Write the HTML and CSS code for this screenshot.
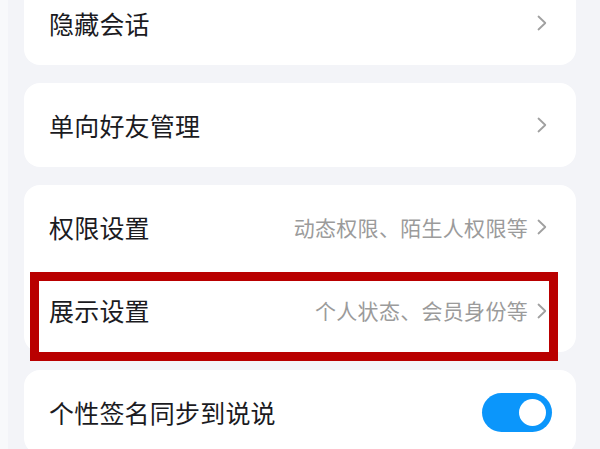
FILE: index.html
```html
<!DOCTYPE html>
<html lang="zh-CN">
<head>
<meta charset="utf-8">
<link rel="stylesheet" href="styles.css">
</head>
<body>
<div class="page">
  <div class="card">
    <div class="row">
      <span class="title">隐藏会话</span>
      <span class="right">
        <svg class="chev" width="10" height="16" viewBox="0 0 10 16"><path d="M1.5 1.5 L8.3 8 L1.5 14.5" fill="none" stroke="#a0a0a0" stroke-width="1.8" stroke-linecap="round" stroke-linejoin="round"/></svg>
      </span>
    </div>
  </div>
  <div class="card">
    <div class="row">
      <span class="title">单向好友管理</span>
      <span class="right">
        <svg class="chev" width="10" height="16" viewBox="0 0 10 16"><path d="M1.5 1.5 L8.3 8 L1.5 14.5" fill="none" stroke="#a0a0a0" stroke-width="1.8" stroke-linecap="round" stroke-linejoin="round"/></svg>
      </span>
    </div>
  </div>
  <div class="card">
    <div class="row">
      <span class="title">权限设置</span>
      <span class="right">
        <span class="sub">动态权限、陌生人权限等</span>
        <svg class="chev" width="10" height="16" viewBox="0 0 10 16"><path d="M1.5 1.5 L8.3 8 L1.5 14.5" fill="none" stroke="#a0a0a0" stroke-width="1.8" stroke-linecap="round" stroke-linejoin="round"/></svg>
      </span>
    </div>
    <div class="row row-short">
      <span class="title">展示设置</span>
      <span class="right">
        <span class="sub">个人状态、会员身份等</span>
        <svg class="chev" width="10" height="16" viewBox="0 0 10 16"><path d="M1.5 1.5 L8.3 8 L1.5 14.5" fill="none" stroke="#a0a0a0" stroke-width="1.8" stroke-linecap="round" stroke-linejoin="round"/></svg>
      </span>
      <div class="mark"></div>
    </div>
  </div>
  <div class="card">
    <div class="row row-toggle">
      <span class="title">个性签名同步到说说</span>
      <span class="toggle"><span class="knob"></span></span>
    </div>
  </div>
</div>
</body>
</html>
```

FILE: styles.css
```css
html, body {
  margin: 0;
  padding: 0;
  background: #f3f4f8;
  overflow: hidden;
}
body {
  font-family: "Noto Sans CJK SC", "Noto Sans", sans-serif;
  width: 600px;
  height: 449px;
  border-left: 8px solid #f8f9fb;
  box-sizing: border-box;
}
.page {
  display: flex;
  flex-direction: column;
  gap: 18px;
  padding: 0 24px 0 16px;
  margin-top: -19px;
}
.card {
  background: #ffffff;
  border-radius: 16px;
  display: flex;
  flex-direction: column;
}
.row {
  height: 84px;
  display: flex;
  align-items: center;
  justify-content: space-between;
  padding: 0 29px 0 25px;
  position: relative;
}
.row-short {
  height: 83px;
}
.row-toggle {
  padding-right: 24px;
}
.title {
  font-size: 25px;
  color: #1b1b1f;
  line-height: 1;
  letter-spacing: 0.2px;
}
.right {
  display: flex;
  align-items: center;
  gap: 9px;
}
.sub {
  font-size: 21px;
  color: #9b9b9b;
  line-height: 1;
  letter-spacing: 0.3px;
}
.chev {
  display: block;
}
.toggle {
  width: 70px;
  height: 39px;
  border-radius: 20px;
  background: #0b96fb;
  display: flex;
  align-items: center;
  justify-content: flex-end;
  padding-right: 6px;
  box-sizing: border-box;
}
.knob {
  width: 27px;
  height: 27px;
  border-radius: 50%;
  background: #ffffff;
}
.mark {
  position: absolute;
  top: 3px;
  left: 6px;
  right: 18px;
  bottom: -9px;
  border: 9px solid #b90000;
  box-sizing: border-box;
  pointer-events: none;
}
```
